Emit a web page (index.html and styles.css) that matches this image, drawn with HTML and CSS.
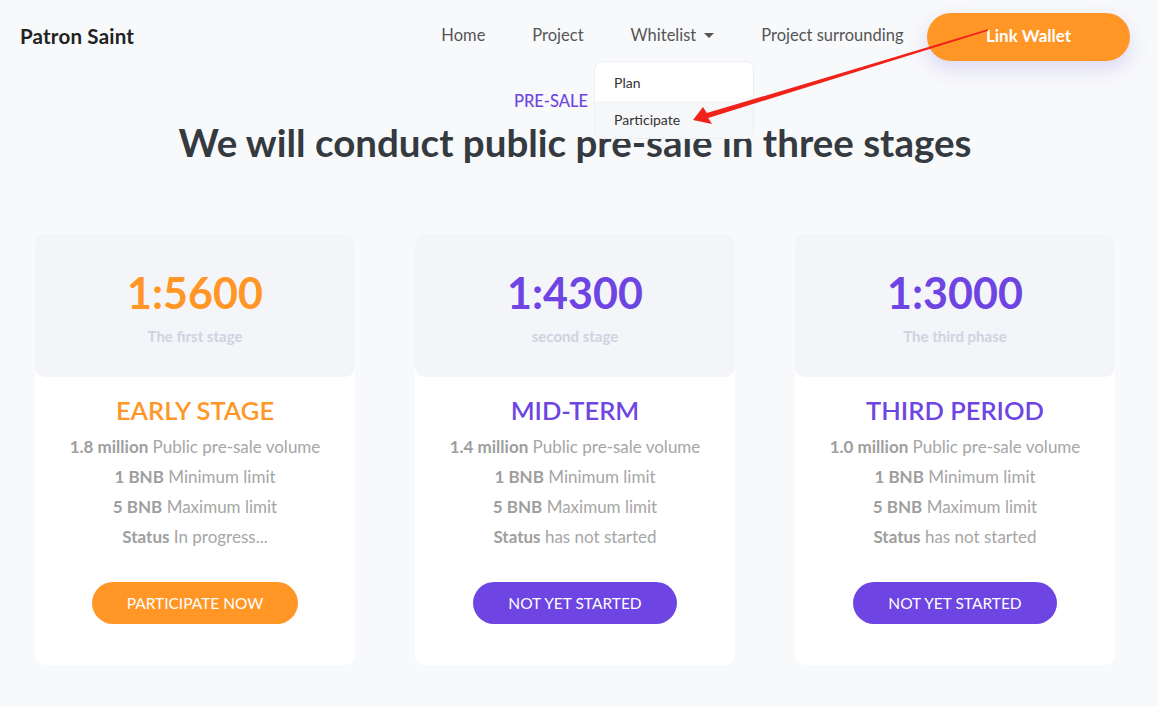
FILE: index.html
```html
<!DOCTYPE html>
<html lang="en">
<head>
<meta charset="utf-8">
<title>Patron Saint</title>
<link rel="stylesheet" href="styles.css">
</head>
<body>
<header class="nav">
  <div class="logo">Patron Saint</div>
  <nav class="menu">
    <a class="menu-link">Home</a>
    <a class="menu-link">Project</a>
    <div class="menu-drop">
      <a class="menu-link">Whitelist <span class="caret"></span></a>
      <div class="dropdown">
        <div class="drop-item">Plan</div>
        <div class="drop-item active">Participate</div>
      </div>
    </div>
    <a class="menu-link">Project surrounding</a>
  </nav>
  <button class="wallet">Link Wallet</button>
</header>

<section class="intro">
  <div class="eyebrow">PRE-SALE</div>
  <h1 class="title">We will conduct public pre-sale in three stages</h1>
</section>

<section class="cards">
  <div class="card">
    <div class="card-top">
      <div class="ratio orange">1:5600</div>
      <div class="phase">The first stage</div>
    </div>
    <div class="card-body">
      <h2 class="stage orange">EARLY STAGE</h2>
      <p class="line"><b>1.8 million</b> Public pre-sale volume</p>
      <p class="line"><b>1 BNB</b> Minimum limit</p>
      <p class="line"><b>5 BNB</b> Maximum limit</p>
      <p class="line"><b>Status</b> In progress...</p>
      <button class="btn btn-orange">PARTICIPATE NOW</button>
    </div>
  </div>
  <div class="card">
    <div class="card-top">
      <div class="ratio purple">1:4300</div>
      <div class="phase">second stage</div>
    </div>
    <div class="card-body">
      <h2 class="stage purple">MID-TERM</h2>
      <p class="line"><b>1.4 million</b> Public pre-sale volume</p>
      <p class="line"><b>1 BNB</b> Minimum limit</p>
      <p class="line"><b>5 BNB</b> Maximum limit</p>
      <p class="line"><b>Status</b> has not started</p>
      <button class="btn btn-purple">NOT YET STARTED</button>
    </div>
  </div>
  <div class="card">
    <div class="card-top">
      <div class="ratio purple">1:3000</div>
      <div class="phase">The third phase</div>
    </div>
    <div class="card-body">
      <h2 class="stage purple">THIRD PERIOD</h2>
      <p class="line"><b>1.0 million</b> Public pre-sale volume</p>
      <p class="line"><b>1 BNB</b> Minimum limit</p>
      <p class="line"><b>5 BNB</b> Maximum limit</p>
      <p class="line"><b>Status</b> has not started</p>
      <button class="btn btn-purple">NOT YET STARTED</button>
    </div>
  </div>
</section>

<svg class="annotation" width="1158" height="706" viewBox="0 0 1158 706" aria-hidden="true">
  <polygon fill="#f0221a" points="987.8,29.3 706.8,113.1 703,107 693,120 712,124 708.2,117.9 988.2,30.7"/>
</svg>
</body>
</html>
```

FILE: styles.css
```css
* { box-sizing: border-box; }
html, body { margin: 0; padding: 0; }
body {
  width: 1158px;
  height: 706px;
  overflow: hidden;
  background: #f8f9fb;
  font-family: "Lato", "Open Sans", sans-serif;
  color: #333;
  position: relative;
}
.nav {
  height: 74px;
  display: flex;
  align-items: center;
  padding: 0 28px 0 20px;
}
.logo {
  font-size: 20.5px;
  font-weight: 700;
  color: #222;
  letter-spacing: 0.2px;
  padding-bottom: 3px;
}
.menu {
  margin-left: auto;
  display: flex;
  align-items: center;
  padding-bottom: 4px;
}
.menu-link {
  font-size: 16.5px;
  line-height: 22px;
  color: #555;
  padding: 0 23.5px;
  display: inline-flex;
  align-items: center;
  gap: 8px;
}
.menu-drop { position: relative; }
.caret {
  width: 0;
  height: 0;
  border-left: 5px solid transparent;
  border-right: 5px solid transparent;
  border-top: 5px solid #555;
}
.dropdown {
  position: absolute;
  top: 37px;
  left: -13px;
  width: 160px;
  background: #fff;
  border: 1px solid #eceef2;
  border-radius: 8px;
  padding: 2px 0 0;
  z-index: 5;
}
.drop-item {
  font-size: 14px;
  color: #333;
  padding: 0 19px;
  height: 37px;
  line-height: 37px;
}
.drop-item.active {
  background: #f6f7f9;
  border-radius: 0 0 8px 8px;
}
.wallet {
  width: 203px;
  height: 48px;
  padding: 0 0 3px;
  border: none;
  border-radius: 24px;
  background: #ff9626;
  color: #fff;
  font-family: inherit;
  font-size: 17px;
  font-weight: 700;
  box-shadow: 0 8px 20px rgba(120, 100, 220, 0.22);
}
.intro {
  width: 1080px;
  margin-left: 35px;
  text-align: center;
  padding-top: 16px;
}
.eyebrow {
  font-size: 16.5px;
  color: #6e45e2;
  font-weight: 500;
  padding-right: 48px;
  line-height: 22px;
}
.title {
  margin: 8px 0 0;
  font-size: 38.5px;
  font-weight: 700;
  color: #343a40;
  line-height: 44px;
}
.cards {
  margin: 70px 0 0 35px;
  display: grid;
  grid-template-columns: repeat(3, 320px);
  gap: 60px;
}
.card {
  background: #fff;
  border-radius: 10px;
  height: 431px;
  display: flex;
  flex-direction: column;
}
.card-top {
  height: 143px;
  background: #f4f5f9;
  border-radius: 10px;
  display: flex;
  flex-direction: column;
  align-items: center;
  padding-top: 36px;
}
.ratio {
  font-size: 43px;
  font-weight: 700;
  line-height: 46px;
}
.phase {
  margin-top: 11px;
  font-size: 15px;
  line-height: 18px;
  font-weight: 700;
  color: #cfd3df;
}
.orange { color: #ff9626; }
.purple { color: #6e45e2; }
.card-body {
  display: flex;
  flex-direction: column;
  align-items: center;
  padding-top: 18px;
}
.stage {
  margin: 0 0 7px;
  font-size: 25.5px;
  font-weight: 600;
  line-height: 30px;
}
.line {
  margin: 0;
  font-size: 17px;
  line-height: 30px;
  color: #a6a6a6;
}
.line b { font-weight: 700; color: #9e9e9e; }
.btn {
  margin-top: 30px;
  height: 42px;
  padding: 0 35px;
  border: none;
  border-radius: 21px;
  color: #fff;
  font-family: inherit;
  font-size: 15.5px;
}
.btn-orange { background: #ff9626; }
.btn-purple { background: #6e45e2; }
.annotation {
  position: absolute;
  left: 0;
  top: 0;
  pointer-events: none;
  z-index: 10;
}
```
